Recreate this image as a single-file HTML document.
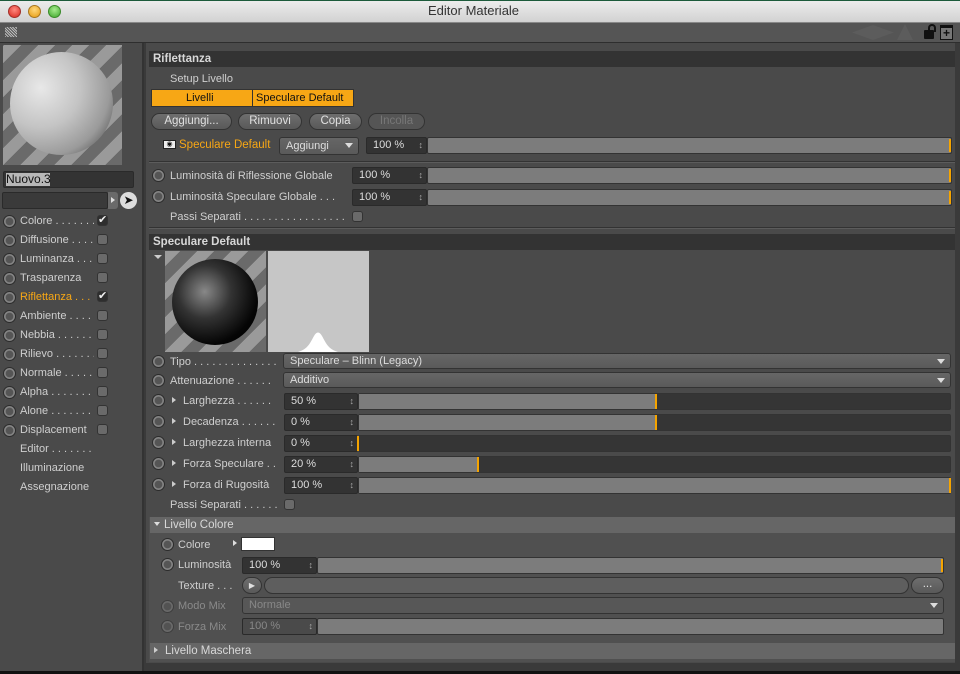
<!DOCTYPE html>
<html><head><meta charset="utf-8"><style>
*{margin:0;padding:0;box-sizing:border-box}
body{width:960px;height:674px;overflow:hidden;background:#3a3a3a;font-family:"Liberation Sans",sans-serif;font-size:11px;color:#d8d8d8;position:relative}
.a{position:absolute}
.t{position:absolute;white-space:nowrap;line-height:14px;font-size:11px;color:#cfcfcf}
.dim{color:#8a8a8a}
.rad{position:absolute;width:13px;height:13px;border-radius:50%;border:1px solid #2c2c2c;background:radial-gradient(circle,#555 0,#555 45%,#888 55%,#6a6a6a 100%)}
.cb{position:absolute;width:11px;height:11px;border-radius:3px;background:#6a6a6a;border:1px solid #333}
.val{position:absolute;height:17px;background:#333;border:1px solid #2a2a2a;border-radius:2px;color:#ddd;padding-left:6px;line-height:15px;font-size:11px}
.val:after{content:"\2195";position:absolute;right:3px;top:0;font-size:9px;color:#aaa}
.sl{position:absolute;height:17px;background:#7c7c7c;border:1px solid #333;border-radius:2px}
.sl.dk{background:#353535}
.dd{position:absolute;height:16px;background:linear-gradient(#666,#5a5a5a);border:1px solid #333;border-radius:3px;color:#ddd;padding-left:6px;line-height:15px}
.dd:after{content:"";position:absolute;right:5px;top:5px;border:4px solid transparent;border-top:5px solid #ddd}
.btn{position:absolute;height:17px;border-radius:9px;background:linear-gradient(#6e6e6e,#595959);border:1px solid #333;color:#e0e0e0;text-align:center;line-height:15px;font-size:11.5px}
.hdr{position:absolute;background:#333;color:#d8d8d8;font-weight:bold;font-size:11.5px;line-height:16px;padding-left:4px}
.sep{position:absolute;height:2px;border-top:1px solid #333;border-bottom:1px solid #5c5c5c}
.tri{display:inline-block;border:3px solid transparent;border-left:4px solid #ccc;margin-right:4px;vertical-align:1px}
.mk{position:absolute;width:2px;background:#f5a400}
</style></head><body>
<div class="a" style="left:0;top:0;width:960px;height:23px;background:linear-gradient(#ededed,#d2d2d2);border-bottom:1px solid #888"></div>
<div class="a" style="left:0;top:0;width:960px;height:1px;background:#1c5a3a"></div>
<div class="a" style="left:8px;top:5px;width:13px;height:13px;border-radius:50%;background:radial-gradient(circle at 50% 35%,#ff8a80,#d8261c);border:1px solid #a0302a"></div>
<div class="a" style="left:28px;top:5px;width:13px;height:13px;border-radius:50%;background:radial-gradient(circle at 50% 35%,#ffd77a,#e59a10);border:1px solid #a87620"></div>
<div class="a" style="left:48px;top:5px;width:13px;height:13px;border-radius:50%;background:radial-gradient(circle at 50% 35%,#a6ec8e,#3da52a);border:1px solid #3a8a2a"></div>
<div class="t" style="left:428px;top:4px;font-size:13px;color:#333">Editor Materiale</div>
<div class="a" style="left:0;top:23px;width:960px;height:20px;background:#555;border-bottom:1px solid #2e2e2e"></div>
<div class="a" style="left:5px;top:27px;width:12px;height:10px;background:repeating-linear-gradient(45deg,#bbb 0 1px,#555 1px 2px)"></div>
<div class="a" style="left:852px;top:25px;width:42px;height:15px;background:#5c5c5c;clip-path:polygon(0 50%,50% 0,100% 50%,50% 100%)"></div>
<div class="a" style="left:897px;top:24px;width:16px;height:16px;background:#5c5c5c;clip-path:polygon(50% 0,100% 100%,0 100%)"></div>
<div class="a" style="left:924px;top:30px;width:10px;height:9px;background:#111;border-radius:1px"></div>
<div class="a" style="left:925px;top:24px;width:8px;height:8px;border:2px solid #111;border-bottom:none;border-radius:4px 4px 0 0;transform:translateX(3px)"></div>
<div class="a" style="left:940px;top:25px;width:13px;height:15px;border:1px solid #111;border-top:3px solid #111;background:#777;color:#111;font-size:12px;line-height:10px;text-align:center;font-weight:bold">+</div>
<div class="a" style="left:0;top:43px;width:144px;height:631px;background:#4a4a4a;border-right:2px solid #333"></div>
<div class="a" style="left:3px;top:45px;width:119px;height:120px;overflow:hidden;background:repeating-linear-gradient(-45deg,#6a6a6a 0 12px,#9a9a9a 12px 24px)">
 <div class="a" style="left:7px;top:7px;width:103px;height:103px;border-radius:50%;background:radial-gradient(circle at 30% 35%,#e8e8e8 0,#c4c4c4 40%,#9a9a9a 70%,#555 90%,#2a2a2a 100%)"></div>
</div>
<div class="a" style="left:3px;top:171px;width:131px;height:17px;background:#333;border:1px solid #2a2a2a;border-radius:2px"></div>
<div class="a" style="left:6px;top:173px;height:13px;width:44px;background:#b8b8b8;color:#111;font-size:12px;line-height:13px">Nuovo.3</div>
<div class="a" style="left:2px;top:192px;width:106px;height:17px;background:#3a3a3a;border:1px solid #2a2a2a;border-radius:2px"></div>
<div class="a" style="left:108px;top:192px;width:10px;height:17px;background:#6a6a6a;border-radius:0 3px 3px 0"></div>
<div class="a" style="left:111px;top:197px;border:3px solid transparent;border-left:4px solid #ddd"></div>
<div class="a" style="left:120px;top:192px;width:17px;height:17px;border-radius:50%;background:#ddd;color:#111;font-size:12px;text-align:center;line-height:17px">&#x27A4;</div>
<div id="lst"></div>
<div class="a" style="left:146px;top:43px;width:809px;height:620px;background:#4a4a4a"></div>
<div class="hdr" style="left:149px;top:51px;width:806px">Riflettanza</div>
<div class="t" style="left:170px;top:72px">Setup Livello</div>
<div class="a" style="left:151px;top:89px;width:203px;height:18px;background:#f7a715;border:1px solid #333"></div>
<div class="a" style="left:252px;top:89px;width:1px;height:18px;background:#333"></div>
<div class="t" style="left:186px;top:91px;color:#111">Livelli</div>
<div class="t" style="left:256px;top:91px;color:#111">Speculare Default</div>
<div class="btn" style="left:151px;top:113px;width:81px">Aggiungi...</div>
<div class="btn" style="left:238px;top:113px;width:64px">Rimuovi</div>
<div class="btn" style="left:309px;top:113px;width:53px">Copia</div>
<div class="btn" style="left:368px;top:113px;width:57px;color:#777;background:#555">Incolla</div>
<div class="a" style="left:163px;top:140px;width:13px;height:9px;background:#eee;border:1px solid #222;font-size:7px;line-height:7px;color:#111;text-align:center">&#x25C9;</div>
<div class="t" style="left:179px;top:138px;color:#f7a715;font-size:11.5px">Speculare Default</div>
<div class="dd" style="left:279px;top:137px;width:80px;height:18px;line-height:16px">Aggiungi</div>
<div class="val" style="left:366px;top:137px;width:61px">100 %</div>
<div class="sl" style="left:427px;top:137px;width:525px"></div><div class="mk" style="left:949px;top:139px;height:13px"></div>
<div class="sep" style="left:149px;top:161px;width:806px"></div>
<div class="rad" style="left:152px;top:169px"></div><div class="t" style="left:170px;top:169px">Luminosità di Riflessione Globale</div>
<div class="val" style="left:352px;top:167px;width:75px">100 %</div><div class="sl" style="left:427px;top:167px;width:525px"></div><div class="mk" style="left:949px;top:169px;height:13px"></div>
<div class="rad" style="left:152px;top:190px"></div><div class="t" style="left:170px;top:190px">Luminosità Speculare Globale . . .</div>
<div class="val" style="left:352px;top:189px;width:75px">100 %</div><div class="sl" style="left:427px;top:189px;width:525px"></div><div class="mk" style="left:949px;top:191px;height:13px"></div>
<div class="t" style="left:170px;top:210px">Passi Separati . . . . . . . . . . . . . . . . .</div><div class="cb" style="left:352px;top:211px"></div>
<div class="sep" style="left:149px;top:227px;width:806px"></div>
<div class="hdr" style="left:149px;top:234px;width:806px">Speculare Default</div>
<div class="a" style="left:154px;top:255px;border:4px solid transparent;border-top:4px solid #ccc"></div>
<div class="a" style="left:165px;top:251px;width:101px;height:101px;overflow:hidden;background:repeating-linear-gradient(-45deg,#6a6a6a 0 12px,#9a9a9a 12px 24px)">
 <div class="a" style="left:7px;top:8px;width:86px;height:86px;border-radius:50%;background:radial-gradient(circle at 38% 38%,#888 0,#333 35%,#050505 70%,#000 100%)"></div></div>
<div class="a" style="left:268px;top:251px;width:101px;height:101px;background:#c6c6c6;overflow:hidden">
 <svg width="101" height="101" style="position:absolute;left:0;top:0"><path d="M30 101 C40 98 42 92 46 85 Q50 78 54 85 C58 92 60 98 70 101 Z" fill="#fff"/></svg></div>
<div id="rows"></div>
<div class="a" style="left:149px;top:517px;width:806px;height:145px;background:#505050"></div>
<div class="hdr" style="left:150px;top:517px;width:805px;background:#666;font-weight:normal"><span class="tri" style="border:3px solid transparent;border-top:4px solid #ddd;vertical-align:-1px"></span>Livello Colore</div>
<div class="rad" style="left:161px;top:538px"></div><div class="t" style="left:178px;top:538px">Colore</div>
<div class="a" style="left:233px;top:540px;border:3px solid transparent;border-left:4px solid #ddd"></div>
<div class="a" style="left:241px;top:537px;width:34px;height:14px;background:#fff;border:1px solid #333"></div>
<div class="rad" style="left:161px;top:558px"></div><div class="t" style="left:178px;top:558px">Luminosità</div>
<div class="val" style="left:242px;top:557px;width:75px">100 %</div><div class="sl" style="left:317px;top:557px;width:627px"></div><div class="mk" style="left:941px;top:559px;height:13px"></div>
<div class="t" style="left:178px;top:579px">Texture . . .</div>
<div class="btn" style="left:242px;top:577px;width:20px;font-size:8px">&#x25B6;</div>
<div class="btn" style="left:264px;top:577px;width:645px;background:#5e5e5e"></div>
<div class="btn" style="left:911px;top:577px;width:33px;line-height:12px">...</div>
<div class="rad" style="left:161px;top:600px;opacity:.5"></div><div class="t dim" style="left:178px;top:599px">Modo Mix</div>
<div class="dd" style="left:242px;top:597px;width:702px;height:17px;color:#888;background:#575757">Normale</div>
<div class="rad" style="left:161px;top:620px;opacity:.5"></div><div class="t dim" style="left:178px;top:620px">Forza Mix</div>
<div class="val" style="left:242px;top:618px;width:75px;color:#888;background:#4a4a4a">100 %</div><div class="sl" style="left:317px;top:618px;width:627px"></div>
<div class="hdr" style="left:150px;top:643px;width:805px;background:#666;font-weight:normal"><span class="tri"></span>Livello Maschera</div>
<div class="a" style="left:0;top:671px;width:960px;height:3px;background:#111"></div>
<script>
var L=[["Colore",1],["Diffusione",0],["Luminanza",0],["Trasparenza",0],["Riflettanza",1,1],["Ambiente",0],["Nebbia",0],["Rilievo",0],["Normale",0],["Alpha",0],["Alone",0],["Displacement",0]];
var h="";L.forEach(function(r,i){var y=214+i*19;h+='<div class="rad" style="left:3px;top:'+(y+1)+'px"></div><div class="t" style="left:20px;top:'+y+'px;width:'+(i==11?76:74)+'px;overflow:hidden;'+(r[2]?'color:#f7a715':'')+'">'+r[0]+(i==11||i==3?'':' . . . . . . . .')+'</div>';
h+='<div class="cb" style="left:97px;top:'+(y+1)+'px;'+(r[1]?'background:#2e2e2e;color:#eee;font-size:11px;line-height:9px;text-align:center':'')+'">'+(r[1]?'&#x2714;':'')+'</div>';});
["Editor . . . . . . .","Illuminazione","Assegnazione"].forEach(function(s,i){h+='<div class="t" style="left:20px;top:'+(442+i*19)+'px">'+s+'</div>';});
document.getElementById("lst").innerHTML=h;
var R=[["Larghezza","50 %",656],["Decadenza","0 %",656],["Larghezza interna","0 %",358],["Forza Speculare","20 %",478],["Forza di Rugosità","100 %",950]];
h='<div class="rad" style="left:152px;top:355px"></div><div class="t" style="left:170px;top:355px">Tipo . . . . . . . . . . . . . .</div><div class="dd" style="left:283px;top:353px;width:668px">Speculare – Blinn (Legacy)</div>';
h+='<div class="rad" style="left:152px;top:374px"></div><div class="t" style="left:170px;top:374px">Attenuazione . . . . . .</div><div class="dd" style="left:283px;top:372px;width:668px">Additivo</div>';
R.forEach(function(r,i){var y=393+i*21;h+='<div class="rad" style="left:152px;top:'+(y+1)+'px"></div><div class="t" style="left:172px;top:'+(y+1)+'px"><span class="tri"></span>'+r[0]+(i<2?' . . . . . .':(i==3?' . .':''))+'</div>';
h+='<div class="val" style="left:284px;top:'+y+'px;width:74px">'+r[1]+'</div><div class="sl dk" style="left:358px;top:'+y+'px;width:593px"></div><div class="a" style="left:359px;top:'+(y+1)+'px;height:15px;background:#7c7c7c;width:'+(r[2]-359)+'px"></div><div class="mk" style="left:'+(r[2]-1)+'px;top:'+(y+1)+'px;height:15px"></div>';});
h+='<div class="t" style="left:170px;top:498px">Passi Separati . . . . . .</div><div class="cb" style="left:284px;top:499px"></div>';
document.getElementById("rows").innerHTML=h;
</script>
</body></html>
